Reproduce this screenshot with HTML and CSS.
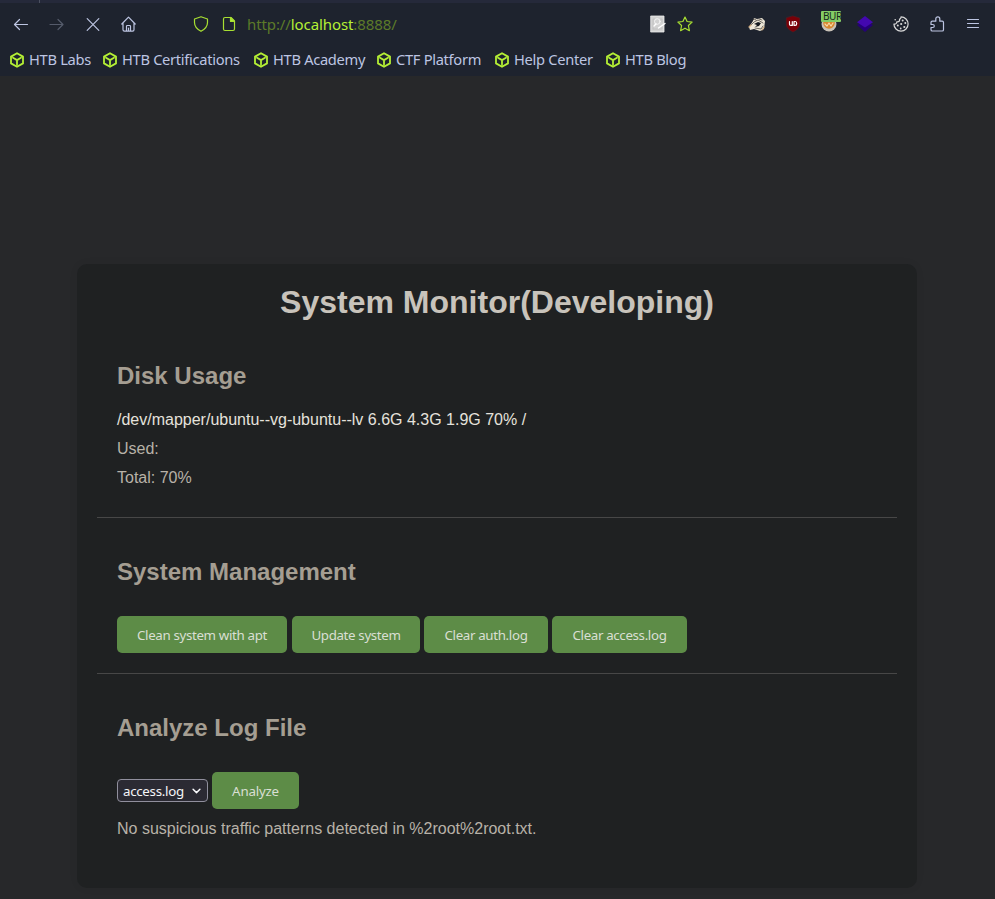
FILE: index.html
```html
<!DOCTYPE html>
<html lang="en">
<head>
<meta charset="utf-8">
<title>System Monitor</title>
<link rel="stylesheet" href="styles.css">
</head>
<body>
<svg class="defs" aria-hidden="true">
  <symbol id="cube" viewBox="0 0 16 16"><path d="M8 1.2 14 4.6v6.8L8 14.8 2 11.4V4.6ZM4 5.8l4 2.3 4-2.3M8 8.1v4.5" fill="none" stroke="#b5f035" stroke-width="1.8" stroke-linejoin="round" stroke-linecap="round"/></symbol>
</svg>
<header class="browser">
  <div class="tabline"><i></i></div>
  <nav class="toolbar">
    <div class="nav-buttons">
      <svg viewBox="0 0 16 16"><path d="M14.500 8.500H1.500M6.500 3.500l-5 5 5 5"/></svg>
      <svg class="dim" viewBox="0 0 16 16"><path d="M1 8.500h13M9 3.500l5 5-5 5"/></svg>
      <svg viewBox="0 0 16 16"><path d="m2.200 2.700 11.600 11.600M13.800 2.700 2.200 14.300"/></svg>
      <svg viewBox="0 0 16 16"><path d="M.8 8 7.500 1.200 14.200 8M2 7v6.800q0 1.400 1.400 1.400h8.200q1.400 0 1.400-1.400V7M5.500 15V10.300q0-.8.8-.8h2.400q.8 0 .8.800V15M7.500 12v3"/></svg>
    </div>
    <div class="address">
      <svg class="lime" viewBox="0 0 16 16"><path d="M8 .7 14.500 3v3.500c0 3.800-2.500 6.700-6.500 8.800-4-2.100-6.500-5-6.500-8.800V3Z"/></svg>
      <svg class="lime page" viewBox="0 0 16 16"><path d="M10 1.500H4Q2.500 1.500 2.500 3v10Q2.500 14.500 4 14.500h8q1.500 0 1.500-1.500V5Z"/><path d="M9.500 1.500v4h4Z" fill="#b5f035"/></svg>
      <span class="url">http://<b>localhost</b>:8888/</span>
      <svg class="note" viewBox="0 0 16 16"><path d="M1 0h13v16H1Z" fill="#d2d2d2" stroke="#ededed" stroke-width=".8"/><path d="M3 13V3h1.500M10.500 3H12v3M3 13h9v-2" stroke="#bcbcbc" stroke-width=".8"/><circle cx="7.300" cy="5.500" r="2.800" stroke="#f4f4f4" stroke-width="1"/><path d="m4 10 2-2M8.500 12 15 7.500" stroke="#fff" stroke-width="1.400"/></svg>
      <svg class="lime star" viewBox="0 0 16 16"><path d="m8 1 2.100 4.500 5 .6-3.700 3.400 1 5.200L8 12.200l-4.400 2.500 1-5.200L.9 6.100l5-.6Z"/></svg>
    </div>
    <div class="extensions">
      <svg viewBox="0 0 16 16"><path d="M0 11 4 5l1-3 3 1 5-1 3 3-1 8-4 2-6-2-4 1Z" fill="#eee7d8" stroke="none"/><path d="m1 10 4-4 4-2 5 3M4 4l1-1 2 1M6 12l6 1 2-3M10 3l3 1" stroke="#35302c" stroke-width=".7"/><path d="m5 8 4-2 3 1-2 3-4 1 2-2Z" fill="#15191f" stroke="none"/><path d="m0 11 2-2M13 14l2-3" stroke="#cda77b"/></svg>
      <svg viewBox="0 0 16 16"><path d="m8 0 6.700 2v6c0 3.500-2.600 6-6.700 8-4.100-2-6.700-4.500-6.700-8V2Z" fill="#790008" stroke="#542127" stroke-width=".5"/><path d="M4.500 5.500v2.700q0 1.200 1.200 1.200H7.300V5.500M9 5.500h1.200q1.500 0 1.500 1.950t-1.500 1.950H9Z" stroke="#fff" stroke-width="1.200"/></svg>
      <div class="burp"><svg viewBox="0 0 16 16"><circle cx="8" cy="8" r="7.500" fill="#c9c2b8" stroke="none"/><circle cx="8" cy="7" r="5.800" fill="#d8872f" stroke="none"/><path d="m4 8 2 2 2-3 2 3 2-3" stroke="#f7d6a6"/></svg><span>BUR</span></div>
      <svg viewBox="0 0 16 16"><path d="m0 9 8-5 8 5-8 7Z" fill="#250078" stroke="none"/><path d="m0 6.200 8-6.200 8 6.200-8 5.300Z" fill="#4308b0" stroke="none"/></svg>
      <svg class="cookie" viewBox="0 0 16 16"><path d="M8 .9A7.100 7.100 0 1 1 .9 8c1.900.3 3-.6 2.900-2.200C6 6 7 5 6.500 3.200 7.700 3 8 2.200 8 .9Z"/><g fill="#d8d8d8" stroke="none"><circle cx="9.700" cy="4.500" r="1"/><circle cx="12.300" cy="7" r="1"/><circle cx="8.200" cy="8" r="1.100"/><circle cx="4.800" cy="9.500" r="1"/><circle cx="11.300" cy="11" r="1.100"/><circle cx="7.700" cy="12.500" r=".9"/><circle cx="2.200" cy="3.700" r=".8"/></g></svg>
      <svg viewBox="0 0 16 16"><path d="M2 8.500V6.500q0-1.300 1.300-1.300h3.500V2.800a2 2 0 0 1 4 0v2.400h2.400q1.300 0 1.300 1.300v7.200q0 1.300-1.300 1.300H3.300q-1.300 0-1.300-1.300V11.500h1.800a1.500 1.500 0 0 0 0-3Z"/></svg>
      <svg viewBox="0 0 16 16"><path d="M2.500 3.500h11M2.500 7.500h11M2.500 11.500h11"/></svg>
    </div>
  </nav>
  <nav class="bookmarks">
    <a><svg><use href="#cube"/></svg><span>HTB Labs</span></a>
    <a><svg><use href="#cube"/></svg><span>HTB Certifications</span></a>
    <a><svg><use href="#cube"/></svg><span>HTB Academy</span></a>
    <a><svg><use href="#cube"/></svg><span>CTF Platform</span></a>
    <a><svg><use href="#cube"/></svg><span>Help Center</span></a>
    <a><svg><use href="#cube"/></svg><span>HTB Blog</span></a>
  </nav>
</header>
<main class="card">
  <h1>System Monitor(Developing)</h1>
  <section class="disk">
    <h2>Disk Usage</h2>
    <p class="bright">/dev/mapper/ubuntu--vg-ubuntu--lv 6.6G 4.3G 1.9G 70% /</p>
    <p>Used:</p>
    <p>Total: 70%</p>
  </section>
  <section class="manage">
    <h2>System Management</h2>
    <div class="actions">
      <button class="clean">Clean system with apt</button>
      <button class="update">Update system</button>
      <button class="auth">Clear auth.log</button>
      <button class="access">Clear access.log</button>
    </div>
  </section>
  <section class="analyze">
    <h2>Analyze Log File</h2>
    <div class="actions">
      <div class="select" role="combobox"><span>access.log</span><svg viewBox="0 0 10 8"><path d="m1.200 2 3.800 3.800L8.800 2"/></svg></div>
      <button class="run">Analyze</button>
    </div>
    <p>No suspicious traffic patterns detected in %2root%2root.txt.</p>
  </section>
</main>
</body>
</html>
```
FILE: styles.css
```css
* { box-sizing: border-box; }
body { margin: 0; height: 899px; overflow: hidden; background: #27282a; color: #b8b2a8; font: 16px "Liberation Sans", Arial, sans-serif; }
svg { display: block; flex: none; width: 16px; height: 16px; fill: none; stroke: #bdc5e2; stroke-width: 1.2; stroke-linecap: round; stroke-linejoin: round; overflow: visible; }
.defs { display: none; }
.browser { height: 76px; background: #1e232e; font-family: "Noto Sans", sans-serif; }
.tabline { height: 3px; background: #25293a; }
.tabline i { display: block; width: 1px; height: 3px; margin-left: 39px; background: #4b5060; }
.toolbar { display: flex; height: 42px; align-items: center; }
.nav-buttons { display: flex; gap: 20px; width: 193px; padding-left: 13px; }
.nav-buttons .dim { stroke: #555b6b; }
.address { display: flex; align-items: center; width: 556px; }
.lime { stroke: #a8df32; }
.page { margin-left: 12px; }
.url { width: 403px; margin-left: 10px; color: #5c7a29; font-size: 15px; line-height: 20px; letter-spacing: -.1px; white-space: nowrap; }
.url b { color: #b5f035; font-weight: 400; }
.star { margin-left: 11px; }
.extensions { display: flex; gap: 20px; }
.cookie { stroke: #d8d8d8; }
.burp { position: relative; width: 16px; height: 16px; }
.burp span { position: absolute; left: 0; top: -5px; width: 20px; height: 11px; padding-left: 2px; border-radius: 1px; background: #84cc66; color: #16251b; font-size: 10px; line-height: 11px; letter-spacing: -.4px; }
.bookmarks { display: grid; grid-template-columns: 93px 151px 123px 118px 111px 100px; height: 30px; padding-left: 9px; align-items: center; color: #bdc5e2; font-size: 14.67px; letter-spacing: -.3px; }
.bookmarks a { display: flex; align-items: center; gap: 4px; white-space: nowrap; }
.bookmarks span { margin-top: -2px; }
.card { width: 840px; height: 624px; margin: 188px 0 0 77px; padding: 20px; border-radius: 10px; background: #1f2122; box-shadow: 0 0 10px rgba(0, 0, 0, .05); }
h1 { margin: 0 0 20px; font-size: 32px; line-height: 37px; text-align: center; color: #c8c3bb; }
section { padding: 20px; border-bottom: 1px solid #474747; }
h2 { margin: 0; font-size: 24px; line-height: 28px; color: #a59e92; }
p { margin: 0; height: 29px; line-height: 18px; }
.bright { color: #e5e2dc; }
.disk { height: 177px; padding-top: 21px; }
.disk h2 { margin-bottom: 21px; }
.manage { height: 156px; padding-top: 40px; }
.manage h2, .analyze h2 { margin-bottom: 30px; }
.analyze { padding-top: 40px; border: 0; }
.actions { display: flex; align-items: center; }
button { height: 37px; padding: 0; border: 0; border-radius: 5px; background: #5d8c47; color: #d9dfd3; font: 13.333px/18px "Noto Sans", sans-serif; letter-spacing: -.35px; }
.clean { width: 170px; margin-right: 5px; }
.update { width: 128px; margin-right: 4px; }
.auth { width: 124px; margin-right: 4px; }
.access { width: 135px; }
.select { display: flex; align-items: center; width: 91px; height: 23px; padding: 0 6px 0 5px; border: 1px solid #908f9d; border-radius: 4px; background: #2b2a33; color: #f5f5f8; font: 13.333px/18px "Noto Sans", sans-serif; letter-spacing: -.3px; justify-content: space-between; }
.select svg { width: 9px; height: 8px; stroke: #fbfbfe; stroke-width: 1.6; }
.run { width: 87px; margin-left: 4px; letter-spacing: -.2px; }
.analyze p { margin-top: 11px; }
```
